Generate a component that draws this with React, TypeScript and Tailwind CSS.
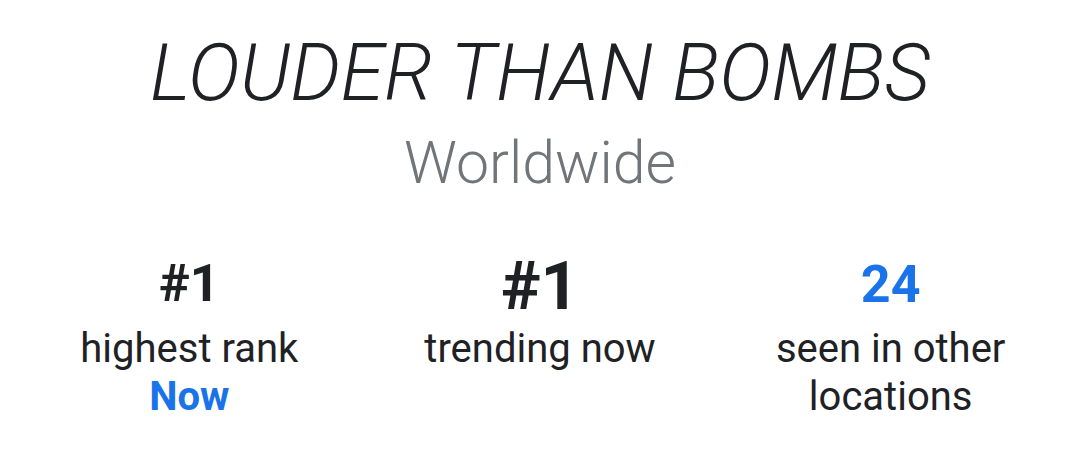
const stats = [
  { value: '#1', size: 'text-[52px] leading-[52px] mb-[15px]', blue: false, label: ['highest rank'], note: 'Now' },
  { value: '#1', size: 'text-[67px] leading-[67px] mb-[5px]', blue: false, label: ['trending now'], note: null },
  { value: '24', size: 'text-[52px] leading-[52px] mb-[14px]', blue: true, label: ['seen in other', 'locations'], note: null },
]

export default function App() {
  return (
    <div className="w-[1080px] h-[458px] bg-white overflow-hidden font-['Roboto',sans-serif] text-[#202124]">
      {/* Song header */}
      <div className="flex flex-col items-center pt-[27px]">
        <h1 className="text-[79px] leading-[92px] font-light italic">LOUDER THAN BOMBS</h1>
        <div className="text-[59px] leading-[88px] font-light text-[#70757a]">Worldwide</div>
      </div>

      {/* Chart stats */}
      <div className="grid grid-cols-3 px-[14px] pt-[45px]">
        {stats.map((s, i) => (
          <div key={i} className="flex flex-col items-center">
            <div className="h-[73px] flex items-end">
              <span className={`font-bold ${s.size} ${s.blue ? 'text-[#1a73e8]' : ''}`}>{s.value}</span>
            </div>
            {s.label.map(l => (
              <div key={l} className="text-[40px] leading-[48px]">{l}</div>
            ))}
            {s.note && <div className="text-[40px] leading-[48px] font-bold text-[#1a73e8]">{s.note}</div>}
          </div>
        ))}
      </div>
    </div>
  )
}
